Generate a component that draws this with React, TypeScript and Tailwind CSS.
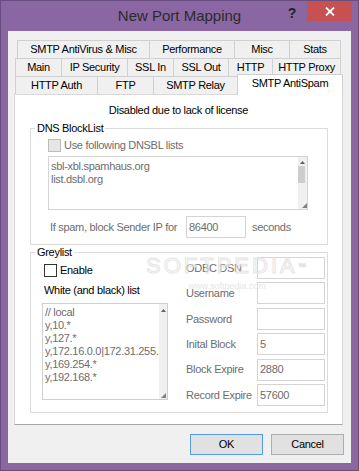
import React from 'react';

const row1 = [
  { label: 'SMTP AntiVirus & Misc', w: 'w-[132px]' },
  { label: 'Performance', w: 'w-[85px]' },
  { label: 'Misc', w: 'w-[55px]' },
  { label: 'Stats', w: 'w-[52px] border-r' },
];

const row2 = [
  { label: 'Main', w: 'w-[46px]' },
  { label: 'IP Security', w: 'w-[66px]' },
  { label: 'SSL In', w: 'w-[46px]' },
  { label: 'SSL Out', w: 'w-[55px]' },
  { label: 'HTTP', w: 'w-[44px]' },
  { label: 'HTTP Proxy', w: 'w-[69px] border-r' },
];

const row3 = [
  { label: 'HTTP Auth', w: 'w-[82px]' },
  { label: 'FTP', w: 'w-[56px]' },
  { label: 'SMTP Relay', w: 'w-[84px]' },
];

const greyList = ['// local', 'y,10.*', 'y,127.*', 'y,172.16.0.0|172.31.255.255', 'y,169.254.*', 'y,192.168.*'];

const greyFields = [
  { label: 'ODBC DSN', value: '' },
  { label: 'Username', value: '' },
  { label: 'Password', value: '' },
  { label: 'Inital Block', value: '5' },
  { label: 'Block Expire', value: '2880' },
  { label: 'Record Expire', value: '57600' },
];

const Tab = ({ label, w }: { label: string; w: string }) => (
  <div className={`${w} h-[18px] border-t border-l border-[#d0d0d0] bg-[#f0f0f0] flex items-center justify-center leading-[13px] whitespace-nowrap`}>
    {label}
  </div>
);

const UpArrow = () => (
  <svg width="5" height="3" viewBox="0 0 5 3" className="shrink-0">
    <path d="M2.5 0 L5 3 L0 3 Z" fill="#606060" />
  </svg>
);

const Grip = () => (
  <svg width="5" height="5" viewBox="0 0 5 5" className="shrink-0">
    <path d="M5 0 L5 5 L0 5 Z" fill="#808080" />
  </svg>
);

export default function App() {
  return (
    <div className="w-[359px] h-[471px] bg-[#8a66a3] border border-[#6a4d80] flex flex-col font-['Liberation_Sans',Arial,sans-serif] text-[11px] tracking-[-0.3px] text-black">
      {/* title bar */}
      <div className="h-[30px] grid grid-cols-[1fr_auto_1fr] shrink-0">
        <div />
        <div className="self-center text-[15px] tracking-normal text-[#2b2b2b] pt-[1px]">New Port Mapping</div>
        <div className="flex justify-end items-start">
          <span className="mt-[5px] mr-[11px] text-[14px] font-bold leading-none text-[#222]">?</span>
          <div className="w-[45px] h-[20px] mr-[6px] bg-[#c75050] flex items-center justify-center">
            <svg width="10" height="9" viewBox="0 0 10 9">
              <path d="M1 0.5 L9 8.5 M9 0.5 L1 8.5" stroke="#fff" strokeWidth="1.8" />
            </svg>
          </div>
        </div>
      </div>

      {/* client area */}
      <div className="mx-[7px] h-[432px] bg-[#f0f0f0] flex flex-col shrink-0">
        <div className="mt-[9px] ml-[6px] w-[329px] flex flex-col">
          <div className="flex pl-[3px]">
            {row1.map((t) => <Tab key={t.label} {...t} />)}
          </div>
          <div className="flex pl-[1px]">
            {row2.map((t) => <Tab key={t.label} {...t} />)}
          </div>
          <div className="flex pl-[1px] items-end h-[18px]">
            {row3.map((t) => <Tab key={t.label} {...t} />)}
            <div className="relative z-10 w-[106px] h-[21px] -mb-px border-t border-l border-r border-[#d0d0d0] bg-white flex justify-center pt-[2px] leading-[13px] whitespace-nowrap">
              SMTP AntiSpam
            </div>
          </div>

          {/* tab page */}
          <div className="relative w-[329px] h-[331px] border border-[#d9d9d9] border-b-[#a8a8a8] bg-white flex flex-col">
            <p className="pt-[9px] text-center leading-[13px]">Disabled due to lack of license</p>

            <fieldset className="mt-[5px] ml-[15px] w-[298px] border border-[#dcdcdc] pb-[6px]">
              <legend className="ml-[4px] px-[2px] leading-[12px]">DNS BlockList</legend>
              <div className="mt-[5px] pl-[17px] flex items-center gap-[3px] h-[13px]">
                <span className="w-[13px] h-[13px] border border-[#bcbcbc] bg-[#e6e6e6]" />
                <span className="leading-[13px] text-[#6d6d6d]">Use following DNSBL lists</span>
              </div>
              <div className="mt-[4px] ml-[17px] w-[260px] h-[54px] border border-[#d4d4d4] bg-white flex">
                <div className="flex-1 pl-[2px] pt-[3px] leading-[13px] text-[#6d6d6d]">
                  <div>sbl-xbl.spamhaus.org</div>
                  <div>list.dsbl.org</div>
                </div>
                <div className="w-[9px] bg-[#f0f0f0] flex flex-col items-center">
                  <div className="mt-[4px]"><UpArrow /></div>
                  <div className="mt-[2px] w-[7px] h-[17px] bg-[#cdcdcd] self-start" />
                  <div className="flex-1" />
                  <div className="mb-[1px] self-end"><Grip /></div>
                </div>
              </div>
              <div className="mt-[6px] pl-[19px] flex items-center h-[22px]">
                <span className="w-[136px] text-[#6d6d6d] whitespace-nowrap">If spam, block Sender IP for</span>
                <div className="w-[60px] h-[22px] border border-[#d4d4d4] pl-[2px] flex items-center text-[#6d6d6d]">86400</div>
                <span className="ml-[6px] text-[#6d6d6d]">seconds</span>
              </div>
            </fieldset>

            <fieldset className="mt-[1px] ml-[15px] w-[298px] border border-[#dcdcdc] pb-[6px]">
              <legend className="ml-[4px] px-[2px] leading-[12px]">Greylist</legend>
              <div className="flex items-start">
                <div className="pl-[11px] flex flex-col">
                  <div className="mt-[6px] ml-[2px] flex items-center gap-[3px] h-[13px]">
                    <span className="w-[13px] h-[13px] border border-[#333] bg-white" />
                    <span className="leading-[13px]">Enable</span>
                  </div>
                  <div className="mt-[7px] ml-[2px] leading-[13px]">White (and black) list</div>
                  <div className="mt-[6px] w-[126px] h-[97px] border border-[#d0d0d0] bg-white flex">
                    <div className="flex-1 overflow-hidden pl-[2px] pt-[2px] leading-[13px] text-[#6d6d6d] whitespace-nowrap">
                      {greyList.map((l) => <div key={l}>{l}</div>)}
                    </div>
                    <div className="w-[8px] bg-[#f0f0f0] flex flex-col items-center">
                      <div className="mt-[5px]"><UpArrow /></div>
                      <div className="flex-1" />
                      <div className="mb-[1px]"><Grip /></div>
                    </div>
                  </div>
                </div>
                <div className="ml-[18px] -mt-px flex flex-col gap-[3.4px]">
                  {greyFields.map((f) => (
                    <div key={f.label} className="flex items-center h-[22px]">
                      <span className="w-[71px] text-[#6d6d6d] whitespace-nowrap">{f.label}</span>
                      <div className="w-[68px] h-[22px] border border-[#d4d4d4] pl-[2px] flex items-center text-[#6d6d6d]">{f.value}</div>
                    </div>
                  ))}
                </div>
              </div>
            </fieldset>

            {/* watermark */}
            <div className="absolute left-[131px] top-[160px] pointer-events-none select-none flex flex-col items-center">
              <span className="text-[22px] tracking-[3px] leading-none text-transparent [-webkit-text-stroke:1px_#e4e4e4]">SOFTPEDIA<sup className="text-[8px]">™</sup></span>
              <span className="mt-[3px] text-[9px] tracking-normal text-[#e6e6e6]">www.softpedia.com</span>
            </div>
          </div>
        </div>

        {/* buttons */}
        <div className="mt-[9px] pr-[7px] flex justify-end gap-[8px]">
          <button className="w-[73px] h-[21px] border border-[#569de5] bg-[#e1e1e1] text-[11px] leading-none">OK</button>
          <button className="w-[73px] h-[21px] border border-[#adadad] bg-[#e1e1e1] text-[11px] leading-none">Cancel</button>
        </div>
      </div>
    </div>
  );
}
